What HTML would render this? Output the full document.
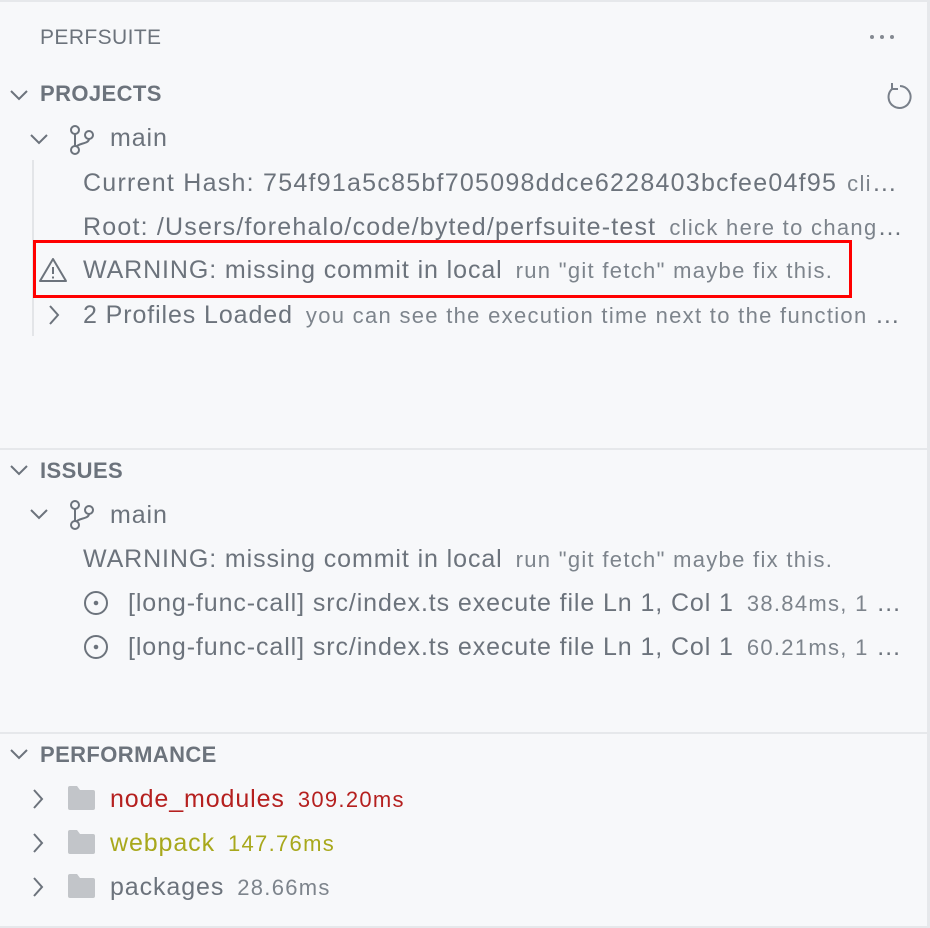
<!DOCTYPE html>
<html><head><meta charset="utf-8"><style>
*{margin:0;padding:0;box-sizing:border-box}
body{width:930px;height:926px;background:#e6e8eb;font-family:"Liberation Sans",Arial,sans-serif;overflow:hidden;position:relative}
#p{position:absolute;left:0;top:2px;width:927px;height:924px;background:#f7f8fa}
#w{position:absolute;left:0;top:2px;width:930px;height:926px}
.r{position:absolute;left:0;height:44px;line-height:44px;white-space:nowrap;overflow:hidden;text-overflow:ellipsis;color:#6c737c;font-size:25px;letter-spacing:0.9px;width:906px}
.d{font-size:22px;color:#7d848c;margin-left:13px;letter-spacing:1.3px}
.h{font-weight:bold;font-size:22px;letter-spacing:0.4px;color:#6c737c}
.sep{position:absolute;left:0;width:927px;height:2px;background:#e6e8eb}
svg{position:absolute}
</style></head><body><div id="p"></div>
<div id="w">
<div class="r" style="top:14px;left:40px;font-size:21px;letter-spacing:0.4px">PERFSUITE</div>
<svg style="left:868px;top:30px" width="30" height="10"><circle cx="4" cy="5" r="2" fill="#858a92"/><circle cx="14" cy="5" r="2" fill="#858a92"/><circle cx="24" cy="5" r="2" fill="#858a92"/></svg>
<svg style="left:884px;top:78px" width="30" height="32" fill="none" stroke="#79808a" stroke-width="2"><path d="M8 9 A11 11 0 1 0 16 6"/><path d="M8 3 V9 H14"/></svg>

<svg style="left:10px;top:87px" width="18" height="12"><path d="M1 2 L9 10 L17 2" fill="none" stroke="#6c737c" stroke-width="2"/></svg>
<div class="r h" style="top:70px;left:40px">PROJECTS</div>
<svg style="left:30px;top:131px" width="18" height="12"><path d="M1 2 L9 10 L17 2" fill="none" stroke="#6c737c" stroke-width="2"/></svg>
<svg style="left:66px;top:122px" width="30" height="32" fill="none" stroke="#6c737c" stroke-width="2"><circle cx="9" cy="6" r="4"/><circle cx="9" cy="26" r="4"/><circle cx="23" cy="11" r="4"/><path d="M9 10 V22 M23 15 C23 20 12 19 10 23"/></svg>
<div class="r" style="top:114px;left:110px">main</div>
<div style="position:absolute;left:32px;top:158px;width:2px;height:176px;background:#e3e5e8"></div>
<div class="r" style="top:159px;left:83px;width:822px;letter-spacing:1.25px">Current Hash: 754f91a5c85bf705098ddce6228403bcfee04f95<span class="d" style="margin-left:10px">click here to copy</span></div>
<div class="r" style="top:203px;left:83px;width:822px;letter-spacing:1.2px">Root: /Users/forehalo/code/byted/perfsuite-test<span class="d">click here to change root</span></div>
<svg style="left:38px;top:254px" width="30" height="28" fill="none" stroke="#6c737c" stroke-width="2"><path d="M15 3 L28 25 H2 Z" stroke-linejoin="round"/><path d="M15 11 V18 M15 20.5 V22.5"/></svg>
<div class="r" style="top:246px;left:83px;width:822px">WARNING: missing commit in local<span class="d">run "git fetch" maybe fix this.</span></div>
<div style="position:absolute;left:33px;top:238px;width:819px;height:58px;border:3px solid #f00"></div>
<svg style="left:48px;top:303px" width="12" height="20"><path d="M2 1 L10 10 L2 19" fill="none" stroke="#6c737c" stroke-width="2"/></svg>
<div class="r" style="top:291px;left:83px;width:822px">2 Profiles Loaded<span class="d">you can see the execution time next to the function name</span></div>

<div class="sep" style="top:446px"></div>
<svg style="left:10px;top:462px" width="18" height="12"><path d="M1 2 L9 10 L17 2" fill="none" stroke="#6c737c" stroke-width="2"/></svg>
<div class="r h" style="top:447px;left:40px">ISSUES</div>
<svg style="left:30px;top:506px" width="18" height="12"><path d="M1 2 L9 10 L17 2" fill="none" stroke="#6c737c" stroke-width="2"/></svg>
<svg style="left:66px;top:497px" width="30" height="32" fill="none" stroke="#6c737c" stroke-width="2"><circle cx="9" cy="6" r="4"/><circle cx="9" cy="26" r="4"/><circle cx="23" cy="11" r="4"/><path d="M9 10 V22 M23 15 C23 20 12 19 10 23"/></svg>
<div class="r" style="top:491px;left:110px">main</div>
<div class="r" style="top:535px;left:83px;width:822px">WARNING: missing commit in local<span class="d">run "git fetch" maybe fix this.</span></div>
<svg style="left:83px;top:588px" width="28" height="28" fill="none" stroke="#6c737c" stroke-width="2"><circle cx="13" cy="13" r="11"/><circle cx="13" cy="13" r="1.3" fill="#6c737c"/></svg>
<div class="r" style="top:579px;left:128px;width:777px">[long-func-call] src/index.ts execute file Ln 1, Col 1<span class="d">38.84ms, 1 times</span></div>
<svg style="left:83px;top:632px" width="28" height="28" fill="none" stroke="#6c737c" stroke-width="2"><circle cx="13" cy="13" r="11"/><circle cx="13" cy="13" r="1.3" fill="#6c737c"/></svg>
<div class="r" style="top:623px;left:128px;width:777px">[long-func-call] src/index.ts execute file Ln 1, Col 1<span class="d">60.21ms, 1 times</span></div>

<div class="sep" style="top:730px"></div>
<svg style="left:10px;top:746px" width="18" height="12"><path d="M1 2 L9 10 L17 2" fill="none" stroke="#6c737c" stroke-width="2"/></svg>
<div class="r h" style="top:731px;left:40px">PERFORMANCE</div>

<svg style="left:32px;top:787px" width="12" height="20"><path d="M2 1 L10 10 L2 19" fill="none" stroke="#6c737c" stroke-width="2"/></svg>
<svg style="left:66px;top:782px" width="31" height="28"><path d="M2 4 Q2 2 4 2 H11 L14 6 H27 Q29 6 29 8 V24 Q29 26 27 26 H4 Q2 26 2 24 Z" fill="#c2c5c9"/></svg>
<div class="r" style="top:775px;left:110px;color:#b5201f">node_modules<span class="d" style="color:#b5201f">309.20ms</span></div>
<svg style="left:32px;top:831px" width="12" height="20"><path d="M2 1 L10 10 L2 19" fill="none" stroke="#6c737c" stroke-width="2"/></svg>
<svg style="left:66px;top:826px" width="31" height="28"><path d="M2 4 Q2 2 4 2 H11 L14 6 H27 Q29 6 29 8 V24 Q29 26 27 26 H4 Q2 26 2 24 Z" fill="#c2c5c9"/></svg>
<div class="r" style="top:819px;left:110px;color:#a8a81c">webpack<span class="d" style="color:#a8a81c">147.76ms</span></div>
<svg style="left:32px;top:875px" width="12" height="20"><path d="M2 1 L10 10 L2 19" fill="none" stroke="#6c737c" stroke-width="2"/></svg>
<svg style="left:66px;top:870px" width="31" height="28"><path d="M2 4 Q2 2 4 2 H11 L14 6 H27 Q29 6 29 8 V24 Q29 26 27 26 H4 Q2 26 2 24 Z" fill="#c2c5c9"/></svg>
<div class="r" style="top:863px;left:110px">packages<span class="d">28.66ms</span></div>
</div>
</body></html>
